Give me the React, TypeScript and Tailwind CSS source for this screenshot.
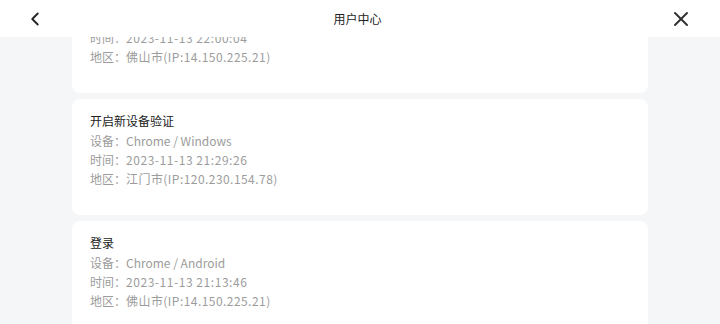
import { ChevronLeft, X } from "lucide-react";

interface LogItem {
    title: string
    device: string
    time: string
    area: string
}

const logs: LogItem[] = [
    { title: "登录", device: "Chrome / Windows", time: "2023-11-13 22:00:04", area: "佛山市(IP:14.150.225.21)" },
    { title: "开启新设备验证", device: "Chrome / Windows", time: "2023-11-13 21:29:26", area: "江门市(IP:120.230.154.78)" },
    { title: "登录", device: "Chrome / Android", time: "2023-11-13 21:13:46", area: "佛山市(IP:14.150.225.21)" },
]

const LogCard = ({ item }: { item: LogItem }) => {
    return (
        <div className="bg-white rounded-[8px] pl-[18px] pr-4 pt-3 pb-[27px]">
            <div className="text-[12px] leading-[20px] text-[#222]">{item.title}</div>
            <div className="text-[12px] leading-[19px] text-[#9c9c9c]">设备：{item.device}</div>
            <div className="text-[12px] leading-[19px] text-[#9c9c9c]">时间：<span className="tracking-[0.55px]">{item.time}</span></div>
            <div className="text-[12px] leading-[19px] text-[#9c9c9c]">地区：<span className="tracking-[0.45px]">{item.area}</span></div>
        </div>
    )
}

const App = () => {
    return (
        <div className="relative w-[720px] h-[324px] overflow-hidden bg-[#f5f6f8]" style={{ fontFamily: '"Noto Sans CJK SC", "Noto Sans", sans-serif' }}>
            <div className="absolute top-0 left-0 right-0 z-10 h-[37px] bg-white flex items-center justify-between pl-[24px] pr-[27px]">
                <ChevronLeft className="w-[22px] h-[22px] text-[#222]" strokeWidth={2} />
                <span className="text-[12px] text-[#222]">用户中心</span>
                <X className="w-[24px] h-[24px] text-[#333]" strokeWidth={2} />
            </div>
            <div className="mt-[-23px] px-[72px] flex flex-col gap-[6px]">
                {logs.map((item, i) => <LogCard key={i} item={item} />)}
            </div>
        </div>
    )
}

export default App
